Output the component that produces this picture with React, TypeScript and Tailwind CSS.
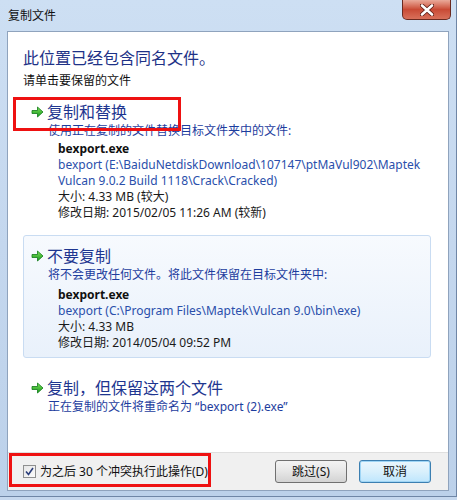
const font = { fontFamily: '"Noto Sans", "Noto Sans CJK SC", sans-serif' };

const GreenArrow = () => (
    <svg width="13" height="12" viewBox="0 0 13 12" className="shrink-0">
        <defs>
            <linearGradient id="ga" x1="0" y1="0" x2="0" y2="1">
                <stop offset="0" stopColor="#7fe05a" />
                <stop offset="1" stopColor="#179a1c" />
            </linearGradient>
        </defs>
        <path d="M1 4.5 H6.5 V1 L12 6 L6.5 11 V7.5 H1 Z" fill="url(#ga)" stroke="#0f7a18" strokeWidth="0.8" strokeLinejoin="round" />
    </svg>
);

const FileInfo = ({ lines }: { lines: { text: string; kind: "bold" | "blue" | "plain" }[] }) => (
    <div className="flex flex-col pl-[34px] text-[12px] leading-[16px]">
        {lines.map((l, i) => (
            <p
                key={i}
                className={
                    l.kind === "bold"
                        ? "font-bold text-[#111]"
                        : l.kind === "blue"
                        ? "text-[#2a4fab]"
                        : "text-[#1a1a1a]"
                }
            >
                {l.text}
            </p>
        ))}
    </div>
);

const Option = ({
    title,
    sub,
    hover,
    children,
}: {
    title: string;
    sub: string;
    hover?: boolean;
    children?: React.ReactNode;
}) => (
    <div
        className={`flex flex-col rounded-[3px] border pt-[9px] pb-[6px] ${
            hover ? "border-[#c9dcf2] bg-gradient-to-b from-[#f7fafe] to-[#e9f1fb]" : "border-transparent"
        }`}
    >
        <div className="flex items-center pl-[7px] gap-[3px] h-[22px]">
            <GreenArrow />
            <span className="text-[16px] leading-[22px] text-[#1e3690]">{title}</span>
        </div>
        <p className="pl-[24px] text-[12px] leading-[16px] text-[#1d3d9e]">{sub}</p>
        {children}
    </div>
);

const App = () => {
    return (
        <div style={font} className="w-[457px] h-[500px] overflow-hidden bg-[#c6d8ee]">
            <div className="relative flex flex-col w-[457px] h-[497px] bg-gradient-to-b from-[#cddff3] via-[#c4d7ee] to-[#bcd1ea] border-r border-b border-[#6f86a6]">
                {/* title bar */}
                <div className="flex items-start justify-between h-[31px] pl-[8px] pr-[5px]">
                    <span className="mt-[8px] text-[12px] leading-[16px] text-[#111]">复制文件</span>
                    <div className="w-[49px] h-[20px] rounded-b-[5px] border border-t-0 border-[#6a2a20] bg-gradient-to-b from-[#e9a99a] via-[#c94a35] to-[#d8705a] flex items-center justify-center">
                        <svg width="14" height="12" viewBox="0 0 14 12">
                            <path d="M2 1.5 L12 10.5 M12 1.5 L2 10.5" stroke="#5a1a12" strokeWidth="4.2" strokeLinecap="round" />
                            <path d="M2 1.5 L12 10.5 M12 1.5 L2 10.5" stroke="#fff" strokeWidth="2.6" strokeLinecap="round" />
                        </svg>
                    </div>
                </div>

                {/* content panel */}
                <div className="flex flex-col flex-1 mx-[7px] mb-[5px] border border-[#8fa3bd] bg-white">
                    <div className="flex flex-col flex-1 pl-[15px] pr-[17px] pt-[16px]">
                        <h1 className="text-[16px] leading-[20px] text-[#1e3287]">此位置已经包含同名文件。</h1>
                        <p className="mt-[5px] text-[12px] leading-[16px] text-[#111]">请单击要保留的文件</p>

                        <div className="mt-[2px] flex flex-col gap-[7px]">
                            <Option title="复制和替换" sub="使用正在复制的文件替换目标文件夹中的文件:">
                                <div className="mt-[2px]">
                                    <FileInfo
                                        lines={[
                                            { text: "bexport.exe", kind: "bold" },
                                            { text: "bexport (E:\\BaiduNetdiskDownload\\107147\\ptMaVul902\\Maptek", kind: "blue" },
                                            { text: "Vulcan 9.0.2 Build 1118\\Crack\\Cracked)", kind: "blue" },
                                            { text: "大小: 4.33 MB (较大)", kind: "plain" },
                                            { text: "修改日期: 2015/02/05 11:26 AM (较新)", kind: "plain" },
                                        ]}
                                    />
                                </div>
                            </Option>
                            <Option hover title="不要复制" sub="将不会更改任何文件。将此文件保留在目标文件夹中:">
                                <div className="mt-[4px]">
                                    <FileInfo
                                        lines={[
                                            { text: "bexport.exe", kind: "bold" },
                                            { text: "bexport (C:\\Program Files\\Maptek\\Vulcan 9.0\\bin\\exe)", kind: "blue" },
                                            { text: "大小: 4.33 MB", kind: "plain" },
                                            { text: "修改日期: 2014/05/04 09:52 PM", kind: "plain" },
                                        ]}
                                    />
                                </div>
                            </Option>
                            <div className="mt-[2px]">
                                <Option title="复制，但保留这两个文件" sub="正在复制的文件将重命名为 “bexport (2).exe”" />
                            </div>
                        </div>
                    </div>

                    {/* footer */}
                    <div className="relative flex items-center justify-between h-[38px] border-t border-[#dfdfdf] bg-[#f0f0f0] pl-[15px] pr-[17px]">
                        <label className="flex items-center gap-[4px]">
                            <span className="w-[13px] h-[13px] border border-[#8e8f8f] bg-gradient-to-br from-[#e6e6e6] to-[#fbfbfb] flex items-center justify-center">
                                <svg width="9" height="9" viewBox="0 0 9 9">
                                    <path d="M1 4.5 L3.5 7.5 L8 1" fill="none" stroke="#2a3d7a" strokeWidth="1.6" />
                                </svg>
                            </span>
                            <span className="text-[12px] leading-[16px] text-[#111]">为之后 30 个冲突执行此操作(D)</span>
                        </label>
                        <div className="flex gap-[12px]">
                            <button className="w-[72px] h-[23px] rounded-[3px] border border-[#707070] bg-gradient-to-b from-[#f3f3f3] via-[#e6e6e6] to-[#d3d3d3] text-[12px] text-[#111]">
                                跳过(S)
                            </button>
                            <button className="w-[72px] h-[23px] rounded-[3px] border border-[#3c7fb1] bg-gradient-to-b from-[#eaf6fd] via-[#d9f0fc] to-[#bee6fd] text-[12px] text-[#111] shadow-[inset_0_0_0_1px_#9fd5f5]">
                                取消
                            </button>
                        </div>
                        <div className="absolute left-[1px] top-[0px] w-[202px] h-[34px] border-[3px] border-[#ee1111]" />
                    </div>
                </div>

                {/* annotation box over first option */}
                <div className="absolute left-[13px] top-[97px] w-[168px] h-[34px] border-[3px] border-[#ee1111]" />
            </div>
        </div>
    );
};

export default App;
